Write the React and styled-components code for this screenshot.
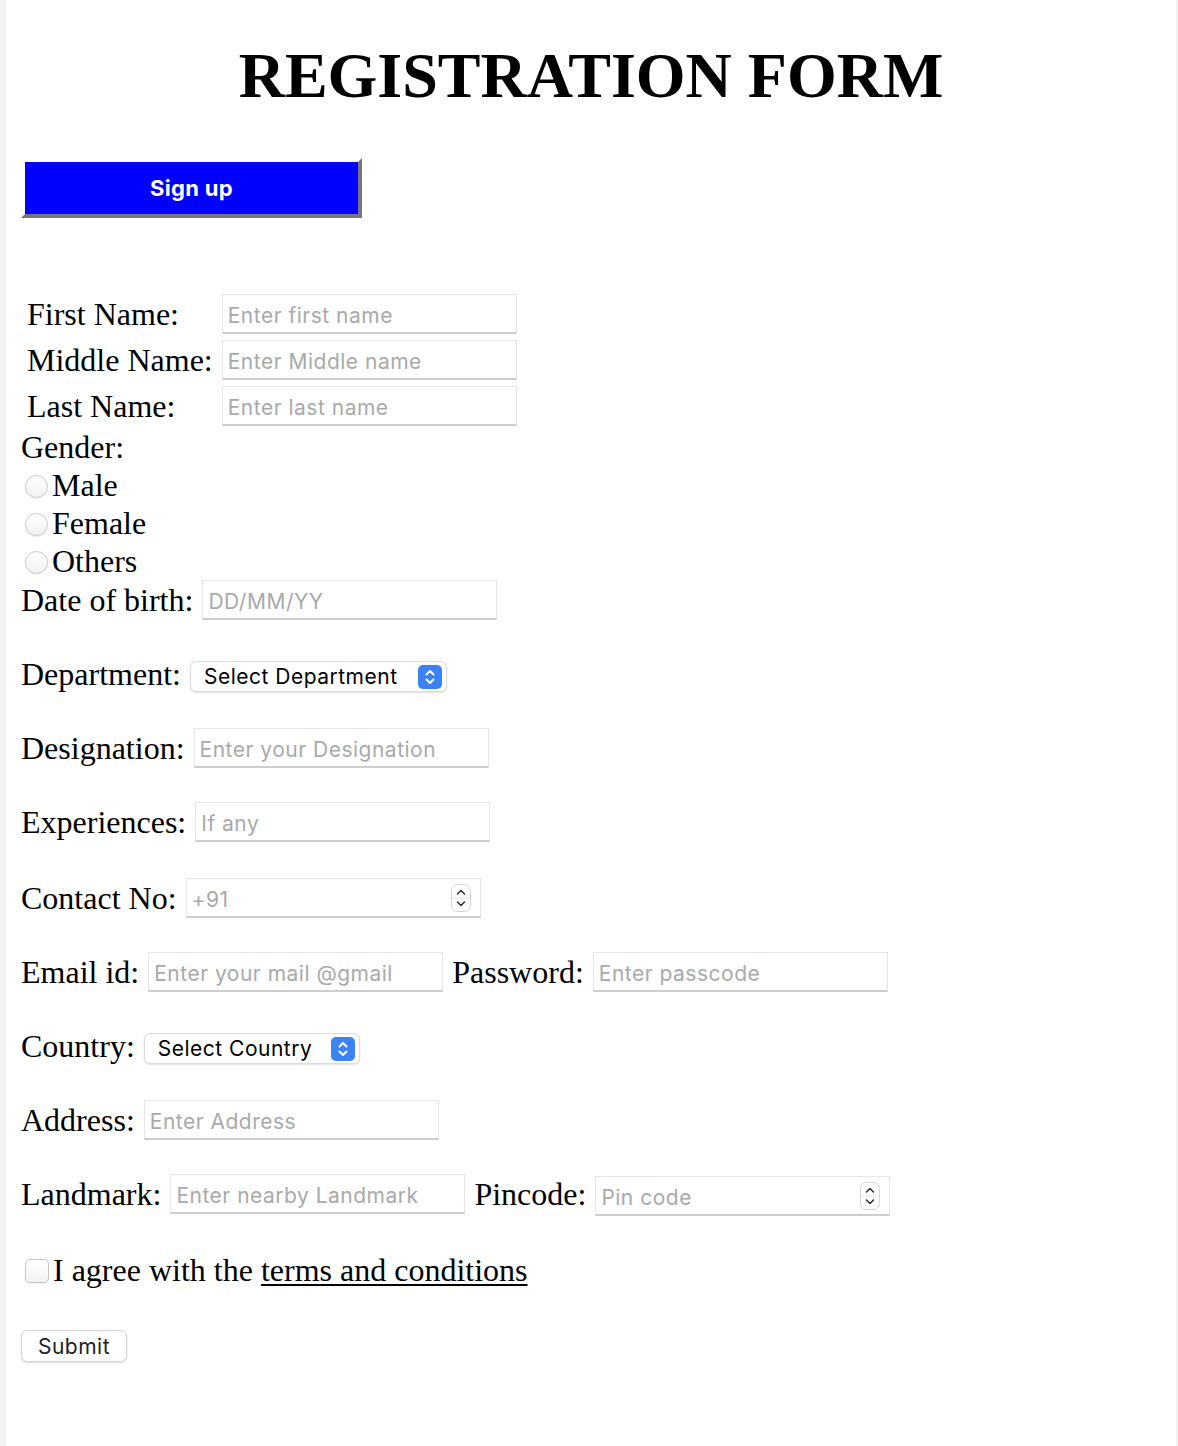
import React from "react";
import styled, { createGlobalStyle } from "styled-components";

const Global = createGlobalStyle`
  html, body { margin: 0; padding: 0; background: #f2f2f2; }
  body { font-family: "Liberation Serif", "Times New Roman", serif; }
`;

const SANS = `Inter, "Noto Sans", sans-serif`;

const Page = styled.div`
  margin-left: 6px;
  width: 1170px;
  min-height: 1446px;
  background: #ffffff;
  box-sizing: border-box;
  padding: 1px 15px 0 15px;
  color: #000;
  font-family: "Liberation Serif", "Times New Roman", serif;
  font-size: 32px;
`;

const Title = styled.h1`
  margin: 38px 0 45px 0;
  text-align: center;
  font-size: 64px;
  line-height: 74px;
  font-weight: 700;
  font-family: "Liberation Serif", "Times New Roman", serif;
`;

const SignUp = styled.button`
  display: block;
  width: 341px;
  height: 60px;
  box-sizing: border-box;
  border-width: 4px;
  border-style: solid;
  border-color: #ffffff #777777 #777777 #ffffff;
  background: #0000ff;
  color: #ffffff;
  font-family: ${SANS};
  font-weight: 700;
  font-size: 22px;
  letter-spacing: 0.3px;
  padding: 0;
  margin: 0;
`;

const NameTable = styled.div`
  display: grid;
  grid-template-columns: auto auto;
  justify-content: start;
  align-items: center;
  column-gap: 9px;
  row-gap: 6px;
  margin: 76px 0 0 6px;
`;

const Label = styled.label`
  font-size: 32px;
  line-height: 37px;
  white-space: nowrap;
`;

const Input = styled.input`
  width: ${(p) => p.$w || 295}px;
  height: 40px;
  box-sizing: border-box;
  margin: 0;
  border: 1px solid #e6e6e6;
  border-bottom: 2px solid #cdcdcd;
  background: #fff;
  padding: 3px 5px 0 5px;
  font-family: ${SANS};
  font-size: 21px;
  letter-spacing: 0.5px;
  color: #000;
  outline: none;
  &::placeholder { color: #a9a9a9; }
`;

const GenderTitle = styled.div`
  margin-top: 3px;
  line-height: 37px;
  height: 37px;
`;

const RadioRow = styled.label`
  display: flex;
  align-items: center;
  height: 38px;
  line-height: 38px;
`;

const Radio = styled.input`
  appearance: none;
  -webkit-appearance: none;
  width: 23px;
  height: 23px;
  margin: 2px 4px 0 4px;
  border-radius: 50%;
  border: 1px solid #c9c9c9;
  background: linear-gradient(#ffffff, #f2f2f2);
  box-shadow: 0 1px 1px rgba(0, 0, 0, 0.07);
  box-sizing: border-box;
`;

const Rows = styled.div`
  display: flex;
  flex-direction: column;
  gap: 34px;
`;

const Row = styled.div`
  display: flex;
  align-items: center;
  height: 40px;
  gap: 9px;
  margin-top: ${(p) => p.$mt || 0}px;
`;

const SelectBox = styled.div`
  display: flex;
  align-items: center;
  width: ${(p) => p.$w}px;
  height: 31px;
  margin-top: 5px;
  box-sizing: border-box;
  border-radius: 6px;
  background: #fff;
  border: 1px solid #dcdcdc;
  box-shadow: 0 1px 2px rgba(0, 0, 0, 0.12);
  padding: 0 4px 0 13px;
`;

const Select = styled.select`
  appearance: none;
  -webkit-appearance: none;
  flex: 1;
  border: none;
  background: transparent;
  font-family: ${SANS};
  font-size: 21px;
  letter-spacing: 0.5px;
  color: #000;
  padding: 0;
  margin: 0;
  outline: none;
`;

const SelectIcon = styled.svg`
  width: 24px;
  height: 24px;
  flex: none;
`;

const NumberBox = styled.div`
  display: flex;
  align-items: center;
  width: ${(p) => p.$w || 295}px;
  height: 40px;
  margin-top: ${(p) => (p.$drop ? 4 : 0)}px;
  box-sizing: border-box;
  border: 1px solid #e6e6e6;
  border-bottom: 2px solid #cdcdcd;
  background: #fff;
  padding: 0 9px 0 5px;
`;

const NumberInput = styled.input`
  flex: 1;
  min-width: 0;
  border: none;
  outline: none;
  padding: 3px 0 0 0;
  margin: 0;
  font-family: ${SANS};
  font-size: 21px;
  letter-spacing: 0.5px;
  color: #000;
  background: transparent;
  &::placeholder { color: #a9a9a9; }
`;

const Spinner = styled.svg`
  width: 20px;
  height: 28px;
  flex: none;
`;

const CheckRow = styled.label`
  display: flex;
  align-items: center;
  height: 40px;
  margin-top: ${(p) => p.$mt || 0}px;
`;

const Checkbox = styled.input`
  appearance: none;
  -webkit-appearance: none;
  width: 24px;
  height: 24px;
  margin: 2px 4px 0 4px;
  border-radius: 5px;
  border: 1px solid #c6c6c6;
  background: linear-gradient(#ffffff, #f2f2f2);
  box-shadow: 0 1px 1px rgba(0, 0, 0, 0.07);
  box-sizing: border-box;
`;

const Terms = styled.a`
  color: #000;
  text-decoration: underline;
  text-underline-offset: 3px;
  text-decoration-thickness: 2px;
  margin-left: 8px;
`;

const SubmitWrap = styled.div`
  display: flex;
  height: 40px;
  align-items: center;
  margin-top: ${(p) => p.$mt || 0}px;
`;

const Submit = styled.button`
  width: 106px;
  height: 32px;
  box-sizing: border-box;
  border-radius: 6px;
  border: 1px solid #d6d6d6;
  background: #fff;
  box-shadow: 0 1px 2px rgba(0, 0, 0, 0.14);
  font-family: ${SANS};
  font-size: 21px;
  letter-spacing: 0.5px;
  color: #222;
  padding: 0;
  margin: 0;
`;

function BlueArrows() {
  return (
    <SelectIcon viewBox="0 0 24 24">
      <rect x="0" y="0" width="24" height="24" rx="5" fill="#3b82f6" />
      <path d="M8.5 9.5 L12 6 L15.5 9.5" fill="none" stroke="#fff" strokeWidth="2" strokeLinecap="round" strokeLinejoin="round" />
      <path d="M8.5 14.5 L12 18 L15.5 14.5" fill="none" stroke="#fff" strokeWidth="2" strokeLinecap="round" strokeLinejoin="round" />
    </SelectIcon>
  );
}

function Stepper() {
  return (
    <Spinner viewBox="0 0 20 28">
      <rect x="0.5" y="0.5" width="19" height="27" rx="6" fill="#fff" stroke="#d4d4d4" />
      <line x1="1" y1="14" x2="19" y2="14" stroke="#e2e2e2" />
      <path d="M6.5 10 L10 6.5 L13.5 10" fill="none" stroke="#333" strokeWidth="1.6" strokeLinecap="round" strokeLinejoin="round" />
      <path d="M6.5 18 L10 21.5 L13.5 18" fill="none" stroke="#333" strokeWidth="1.6" strokeLinecap="round" strokeLinejoin="round" />
    </Spinner>
  );
}

export default function App() {
  return (
    <>
      <Global />
      <Page>
        <Title>REGISTRATION FORM</Title>
        <SignUp type="button">Sign up</SignUp>

        <NameTable>
          <Label>First Name:</Label>
          <Input placeholder="Enter first name" />
          <Label>Middle Name:</Label>
          <Input placeholder="Enter Middle name" />
          <Label>Last Name:</Label>
          <Input placeholder="Enter last name" />
        </NameTable>

        <GenderTitle>Gender:</GenderTitle>
        <RadioRow><Radio type="radio" name="gender" />Male</RadioRow>
        <RadioRow><Radio type="radio" name="gender" />Female</RadioRow>
        <RadioRow><Radio type="radio" name="gender" />Others</RadioRow>

        <Rows>
          <Row>
            <Label>Date of birth:</Label>
            <Input placeholder="DD/MM/YY" />
          </Row>
          <Row>
            <Label>Department:</Label>
            <SelectBox $w={257}>
              <Select defaultValue="">
                <option value="">Select Department</option>
              </Select>
              <BlueArrows />
            </SelectBox>
          </Row>
          <Row>
            <Label>Designation:</Label>
            <Input placeholder="Enter your Designation" />
          </Row>
          <Row>
            <Label>Experiences:</Label>
            <Input placeholder="If any" />
          </Row>
          <Row $mt={2}>
            <Label>Contact No:</Label>
            <NumberBox>
              <NumberInput placeholder="+91" />
              <Stepper />
            </NumberBox>
          </Row>
          <Row>
            <Label>Email id:</Label>
            <Input placeholder="Enter your mail @gmail" />
            <Label>Password:</Label>
            <Input type="password" placeholder="Enter passcode" />
          </Row>
          <Row>
            <Label>Country:</Label>
            <SelectBox $w={216}>
              <Select defaultValue="">
                <option value="">Select Country</option>
              </Select>
              <BlueArrows />
            </SelectBox>
          </Row>
          <Row>
            <Label>Address:</Label>
            <Input placeholder="Enter Address" />
          </Row>
          <Row>
            <Label>Landmark:</Label>
            <Input placeholder="Enter nearby Landmark" />
            <Label>Pincode:</Label>
            <NumberBox $drop>
              <NumberInput placeholder="Pin code" />
              <Stepper />
            </NumberBox>
          </Row>
          <CheckRow $mt={2}>
            <Checkbox type="checkbox" />
            I agree with the<Terms href="#">terms and conditions</Terms>
          </CheckRow>
          <SubmitWrap $mt={2}>
            <Submit type="button">Submit</Submit>
          </SubmitWrap>
        </Rows>
      </Page>
    </>
  );
}
